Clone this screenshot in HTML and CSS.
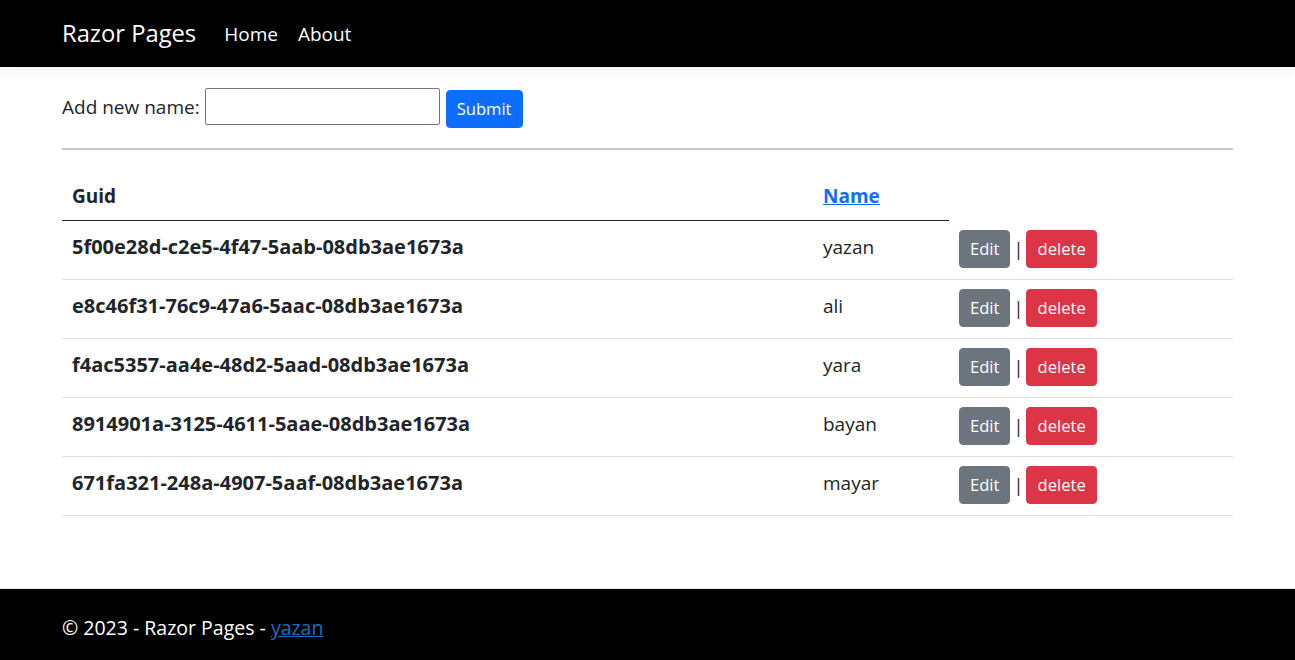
FILE: index.html
```html
<!DOCTYPE html>
<html lang="en">
<head>
<meta charset="utf-8">
<title>Razor Pages</title>
<link rel="stylesheet" href="styles.css">
</head>
<body>
<header class="navbar">
  <div class="container nav-inner">
    <a class="brand" href="#">Razor Pages</a>
    <nav class="nav-links">
      <a class="nav-link" href="#">Home</a>
      <a class="nav-link" href="#">About</a>
    </nav>
  </div>
</header>
<main class="container main">
  <form class="add-form">
    <label class="add-label" for="name">Add new name:</label>
    <input class="add-input" id="name" type="text">
    <button class="btn btn-primary btn-submit" type="button">Submit</button>
  </form>
  <hr class="divider">
  <table class="table">
    <colgroup>
      <col class="col-guid">
      <col class="col-name">
      <col class="col-actions">
    </colgroup>
    <thead>
      <tr>
        <th class="head-cell">Guid</th>
        <th class="head-cell"><a class="sort-link" href="#">Name</a></th>
      </tr>
    </thead>
    <tbody>
      <tr>
        <td class="guid">5f00e28d-c2e5-4f47-5aab-08db3ae1673a</td>
        <td class="name">yazan</td>
        <td class="actions"><span class="btn btn-secondary">Edit</span><span class="sep">|</span><span class="btn btn-danger">delete</span></td>
      </tr>
      <tr>
        <td class="guid">e8c46f31-76c9-47a6-5aac-08db3ae1673a</td>
        <td class="name">ali</td>
        <td class="actions"><span class="btn btn-secondary">Edit</span><span class="sep">|</span><span class="btn btn-danger">delete</span></td>
      </tr>
      <tr>
        <td class="guid">f4ac5357-aa4e-48d2-5aad-08db3ae1673a</td>
        <td class="name">yara</td>
        <td class="actions"><span class="btn btn-secondary">Edit</span><span class="sep">|</span><span class="btn btn-danger">delete</span></td>
      </tr>
      <tr>
        <td class="guid">8914901a-3125-4611-5aae-08db3ae1673a</td>
        <td class="name">bayan</td>
        <td class="actions"><span class="btn btn-secondary">Edit</span><span class="sep">|</span><span class="btn btn-danger">delete</span></td>
      </tr>
      <tr>
        <td class="guid">671fa321-248a-4907-5aaf-08db3ae1673a</td>
        <td class="name">mayar</td>
        <td class="actions"><span class="btn btn-secondary">Edit</span><span class="sep">|</span><span class="btn btn-danger">delete</span></td>
      </tr>
    </tbody>
  </table>
</main>
<footer class="footer">
  <div class="container">&copy; 2023 - Razor Pages - <a class="footer-link" href="#">yazan</a></div>
</footer>
</body>
</html>
```

FILE: styles.css
```css
* { box-sizing: border-box; }
html, body { margin: 0; padding: 0; }
body {
  font-family: "Open Sans", "Noto Sans", "Liberation Sans", sans-serif;
  font-size: 19px;
  line-height: 30px;
  color: #212529;
  background: #fff;
  height: 660px;
  overflow: hidden;
  display: flex;
  flex-direction: column;
}
.container {
  width: 1171px;
  margin: 0 auto;
}
.navbar {
  background: #000;
  height: 67px;
  box-shadow: 0 5px 15px rgba(0,0,0,.05);
  position: relative;
  z-index: 1;
  flex: none;
}
.nav-inner {
  display: flex;
  align-items: center;
  height: 67px;
}
.brand {
  color: #fff;
  text-decoration: none;
  font-size: 23.75px;
  line-height: 37px;
  margin-right: 18px;
}
.nav-links { display: flex; }
.nav-link {
  color: #fff;
  text-decoration: none;
  padding: 0 10px;
  line-height: 30px;
}
.main {
  padding-top: 20px;
  flex: 1;
}
.add-form {
  display: flex;
  align-items: flex-start;
  padding-top: 1px;
}
.add-label {
  margin-top: 4px;
  margin-right: 5px;
}
.add-input {
  width: 235px;
  height: 37px;
  border: 1px solid #767676;
  border-radius: 2px;
  margin: 0 6px 0 0;
  font: inherit;
}
.btn {
  display: inline-block;
  font-size: 16.6px;
  line-height: 26px;
  padding: 5px 10px;
  border: 1px solid transparent;
  border-radius: 4px;
  color: #fff;
  font-family: inherit;
  vertical-align: middle;
}
.btn-submit { margin-top: 2px; }
.btn-primary { background: #0d6efd; border-color: #0d6efd; }
.btn-secondary { background: #6c757d; border-color: #6c757d; }
.btn-danger { background: #dc3545; border-color: #dc3545; }
.divider {
  margin: 20px 0;
  border: 0;
  border-top: 2px solid #c8c8c8;
  height: 0;
}
.table {
  width: 100%;
  border-collapse: collapse;
  table-layout: fixed;
}
.col-guid { width: 751px; }
.col-name { width: 136px; }
.col-actions { width: 284px; }
.head-cell {
  text-align: left;
  font-weight: 700;
  padding: 11px 10px 9px;
  border-bottom: 1px solid #212529;
  vertical-align: bottom;
}
.sort-link { color: #0d6efd; text-decoration: underline; }
.table td {
  padding: 10px;
  border-bottom: 1px solid #dee2e6;
  vertical-align: top;
}
.table td.guid, .table td.name { padding-top: 11px; padding-bottom: 9px; }
.guid { font-weight: 700; font-size: 20px; }
.actions { white-space: nowrap; }
.table td.actions { padding-top: 9px; padding-bottom: 11px; }
.actions .btn { vertical-align: top; }
.sep {
  display: inline-block;
  width: 16px;
  text-align: center;
  color: #333;
  line-height: 38px;
  vertical-align: top;
}
.footer {
  flex: none;
  height: 72px;
  background: #000;
  border-top: 1px solid #dee2e6;
  color: #fff;
  padding-top: 6px;
  line-height: 66px;
  font-size: 19.5px;
  white-space: nowrap;
}
.footer-link { color: #1b6ec2; text-decoration: underline; }
```
